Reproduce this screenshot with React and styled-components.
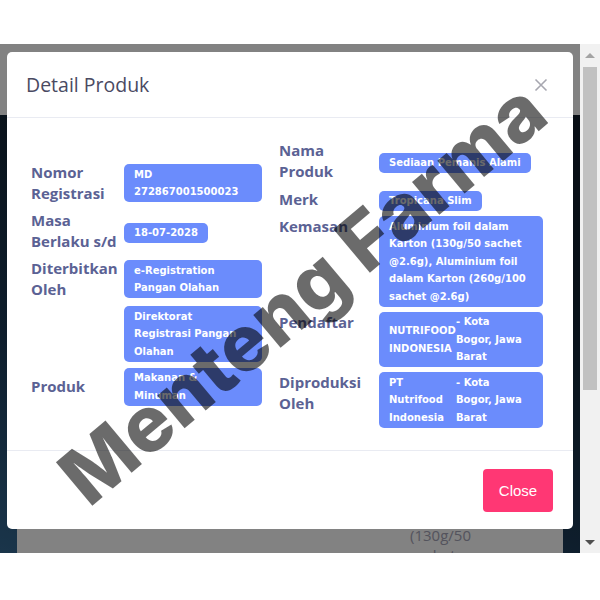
import React from 'react';
import styled, { createGlobalStyle } from 'styled-components';

const GlobalStyle = createGlobalStyle`
  html, body {
    margin: 0;
    padding: 0;
    background: #ffffff;
  }
  * { box-sizing: border-box; }
`;

const Root = styled.div`
  position: relative;
  width: 600px;
  height: 600px;
  overflow: hidden;
  background: #ffffff;
  font-family: "Open Sans", sans-serif;
`;

const Screen = styled.div`
  padding-top: 44px;
  height: 553px;
  display: flex;
`;

const Viewport = styled.div`
  position: relative;
  flex: 1;
  display: flex;
  flex-direction: column;
  overflow: hidden;
`;

const TopBar = styled.div`
  height: 71px;
  flex: none;
  background: #ffffff;
`;

const Main = styled.div`
  flex: 1;
  padding: 0 17px;
  display: flex;
  flex-direction: column;
  background: linear-gradient(20deg, #3a76a4 0%, #1c3a56 40%, #122230 75%, #101c2a 100%);
`;

const Card = styled.div`
  margin-top: 300px;
  flex: none;
  height: 200px;
  background: #ffffff;
  padding: 30px 0 0 393px;
  font-family: "Open Sans", sans-serif;
  font-size: 15px;
  line-height: 20px;
  color: #a4a4b6;
`;

const Backdrop = styled.div`
  position: absolute;
  inset: 0;
  background: rgba(0, 0, 0, 0.49);
`;

const Modal = styled.div`
  position: absolute;
  top: 8px;
  left: 7px;
  width: 566px;
  height: 477px;
  background: #ffffff;
  border-radius: 5px;
  display: flex;
  flex-direction: column;
`;

const Header = styled.div`
  height: 66px;
  padding: 0 25px 0 19px;
  border-bottom: 1px solid #e9ebf2;
  display: flex;
  align-items: center;
  justify-content: space-between;
`;

const Title = styled.h5`
  margin: 0;
  font-size: 19.5px;
  font-weight: 400;
  color: #4a4a62;
`;

const CloseX = styled.button`
  border: 0;
  background: none;
  padding: 0;
  width: 14px;
  height: 14px;
  display: flex;
  color: #a7a7b0;
`;

const Body = styled.div`
  flex: 1;
  padding: 0 30px 0 24px;
  display: flex;
  align-items: center;
  gap: 17px;
`;

const Column = styled.div`
  display: grid;
  grid-template-columns: ${p => p.$label}px ${p => p.$value}px;
  row-gap: ${p => p.$gap}px;
`;

const Label = styled.div`
  align-self: ${p => (p.$top ? 'start' : 'center')};
  font-size: 15px;
  font-weight: 700;
  line-height: 21px;
  color: #5b6294;
`;

const ValueCell = styled.div`
  align-self: center;
`;

const Value = styled.div`
  display: ${p => (p.$full ? 'block' : 'inline-block')};
  padding: 1.5px 10px;
  border-radius: 5px;
  background: #6b8cfc;
  color: #ffffff;
  font-family: "DejaVu Sans", sans-serif;
  font-size: 10px;
  font-weight: 700;
  line-height: 17.5px;
  white-space: nowrap;
`;

const Split = styled.div`
  display: flex;
  align-items: center;
  gap: 1px;
`;

const SplitLeft = styled.div`
  width: 66px;
`;

const Footer = styled.div`
  height: 79px;
  border-top: 1px solid #e9ebf2;
  padding: 0 20px;
  display: flex;
  align-items: center;
  justify-content: flex-end;
`;

const CloseButton = styled.button`
  width: 70px;
  height: 43px;
  border: 0;
  border-radius: 4px;
  background: #ff3774;
  color: #ffffff;
  font-family: "Liberation Sans", Arial, sans-serif;
  font-size: 15px;
`;

const Scrollbar = styled.div`
  width: 20px;
  background: #f1f1f1;
  display: flex;
  flex-direction: column;
  align-items: center;
`;

const Arrow = styled.div`
  height: 22px;
  display: flex;
  align-items: center;
  justify-content: center;
  &::before {
    content: '';
    border-left: 5px solid transparent;
    border-right: 5px solid transparent;
    ${p => (p.$down ? 'border-top: 5px solid #505050;' : 'border-bottom: 5px solid #a3a3a3;')}
  }
`;

const Thumb = styled.div`
  margin-top: 1px;
  width: 14px;
  height: 323px;
  background: #c1c1c1;
`;

const Spacer = styled.div`
  flex: 1;
`;

const Watermark = styled.div`
  position: absolute;
  inset: 0;
  display: flex;
  align-items: center;
  justify-content: center;
  pointer-events: none;
  span {
    transform: translate(2px, -8px) rotate(-40deg);
    font-family: Inter, sans-serif;
    font-weight: 800;
    font-size: 78px;
    white-space: nowrap;
    color: rgba(0, 0, 0, 0.58);
  }
`;

const lines = arr => arr.map((l, i) => (
  <React.Fragment key={i}>{i > 0 && <br />}{l}</React.Fragment>
));

function Row({ label, top, value, full }) {
  return (
    <>
      <Label $top={top}>{label ? lines(label) : null}</Label>
      <ValueCell><Value $full={full}>{value}</Value></ValueCell>
    </>
  );
}

export default function App() {
  return (
    <Root>
      <GlobalStyle />
      <Screen>
        <Viewport>
          <TopBar />
          <Main>
            <Card>
              {lines(['Aluminium', 'foil dalam', 'Karton', 'dalam', '(130g/50', 'sachet', '@2.6g)'])}
            </Card>
          </Main>
          <Backdrop />
          <Modal>
            <Header>
              <Title>Detail Produk</Title>
              <CloseX aria-label="Close">
                <svg width="14" height="14" viewBox="0 0 14 14">
                  <path d="M1.5 1.5 L12.5 12.5 M12.5 1.5 L1.5 12.5" stroke="currentColor" strokeWidth="1.6" fill="none" />
                </svg>
              </CloseX>
            </Header>
            <Body>
              <Column $label={93} $value={138} $gap={6}>
                <Row label={['Nomor', 'Registrasi']} full value={lines(['MD', '272867001500023'])} />
                <Row label={['Masa', 'Berlaku s/d']} value="18-07-2028" />
                <Row label={['Diterbitkan', 'Oleh']} full value={lines(['e-Registration', 'Pangan Olahan'])} />
                <Row full value={lines(['Direktorat', 'Registrasi Pangan', 'Olahan'])} />
                <Row label={['Produk']} full value={lines(['Makanan &', 'Minuman'])} />
              </Column>
              <Column $label={100} $value={164} $gap={5}>
                <Row label={['Nama', 'Produk']} value="Sediaan Pemanis Alami" />
                <Row label={['Merk']} value="Tropicana Slim" />
                <Row
                  label={['Kemasan']}
                  top
                  full
                  value={lines(['Aluminium foil dalam', 'Karton (130g/50 sachet', '@2.6g), Aluminium foil', 'dalam Karton (260g/100', 'sachet @2.6g)'])}
                />
                <Row
                  label={['Pendaftar']}
                  top
                  full
                  value={
                    <Split>
                      <SplitLeft>{lines(['NUTRIFOOD', 'INDONESIA'])}</SplitLeft>
                      <div>{lines(['- Kota', 'Bogor, Jawa', 'Barat'])}</div>
                    </Split>
                  }
                />
                <Row
                  label={['Diproduksi', 'Oleh']}
                  top
                  full
                  value={
                    <Split>
                      <SplitLeft>{lines(['PT', 'Nutrifood', 'Indonesia'])}</SplitLeft>
                      <div>{lines(['- Kota', 'Bogor, Jawa', 'Barat'])}</div>
                    </Split>
                  }
                />
              </Column>
            </Body>
            <Footer>
              <CloseButton>Close</CloseButton>
            </Footer>
          </Modal>
        </Viewport>
        <Scrollbar>
          <Arrow />
          <Thumb />
          <Spacer />
          <Arrow $down />
        </Scrollbar>
      </Screen>
      <Watermark><span>Menteng Farma</span></Watermark>
    </Root>
  );
}
